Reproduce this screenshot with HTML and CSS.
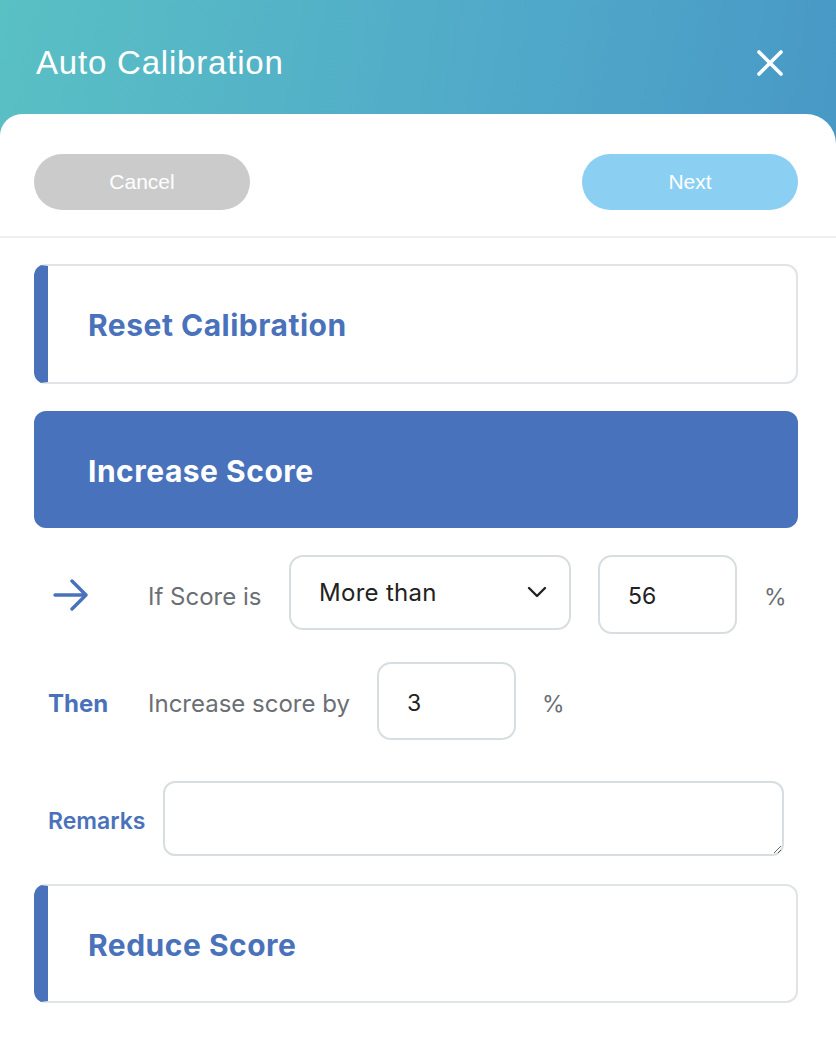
FILE: index.html
```html
<!DOCTYPE html>
<html lang="en">
<head>
<meta charset="utf-8">
<title>Auto Calibration</title>
<link rel="stylesheet" href="styles.css">
</head>
<body>
<div class="page">
  <header class="header">
    <h1 class="title">Auto Calibration</h1>
    <button class="close" aria-label="Close">
      <svg width="26" height="26" viewBox="0 0 26 26"><path d="M2 2 L24 24 M24 2 L2 24" stroke="#fff" stroke-width="3.6" stroke-linecap="round" fill="none"/></svg>
    </button>
  </header>
  <main class="panel">
    <div class="actions">
      <button class="btn btn-cancel">Cancel</button>
      <button class="btn btn-next">Next</button>
    </div>
    <div class="content">
      <div class="card card-outline"><span class="card-title">Reset Calibration</span></div>
      <div class="card card-filled"><span class="card-title">Increase Score</span></div>

      <div class="row row-if">
        <div class="lead lead-icon">
          <svg width="36" height="32" viewBox="0 0 36 32"><path d="M2 16 H33 M19 2 L33 16 L19 30" stroke="#4a72bb" stroke-width="3.4" stroke-linecap="round" stroke-linejoin="round" fill="none"/></svg>
        </div>
        <span class="label label-if">If Score is</span>
        <div class="select">
          <span>More than</span>
          <svg width="20" height="12" viewBox="0 0 20 12"><path d="M2 2 L10 10 L18 2" stroke="#222" stroke-width="2.4" stroke-linecap="round" stroke-linejoin="round" fill="none"/></svg>
        </div>
        <div class="input input-tall">56</div>
        <span class="unit unit-if">%</span>
      </div>

      <div class="row row-then">
        <div class="lead lead-text"><span class="then">Then</span></div>
        <span class="label label-then">Increase score by</span>
        <div class="input input-mid">3</div>
        <span class="unit unit-then">%</span>
      </div>

      <div class="row row-remarks">
        <div class="lead lead-remarks"><span class="remarks">Remarks</span></div>
        <textarea class="textarea"></textarea>
      </div>

      <div class="card card-outline card-last"><span class="card-title">Reduce Score</span></div>
    </div>
  </main>
</div>
</body>
</html>
```

FILE: styles.css
```css
* { box-sizing: border-box; }
html, body { margin: 0; padding: 0; background: #fff; }
body { width: 836px; height: 1042px; overflow: hidden; font-family: "Inter", "Noto Sans", sans-serif; }

.page {
  background: linear-gradient(100deg, #59c0c4 0%, #50a9c9 60%, #4899c6 100%);
  background-size: 100% 150px;
  background-repeat: no-repeat;
  min-height: 1042px;
}

.header {
  height: 114px;
  display: flex;
  align-items: center;
  justify-content: space-between;
  padding: 12px 53px 0 36px;
}
.title {
  margin: 0;
  font-family: "Liberation Sans", Arial, sans-serif;
  font-weight: 400;
  font-size: 33px;
  color: #fff;
  letter-spacing: 0.8px;
}
.close {
  background: none;
  border: 0;
  padding: 0;
  width: 26px;
  height: 26px;
  display: flex;
}

.panel {
  background: #fff;
  border-radius: 22px 30px 0 0;
  min-height: 928px;
}

.actions {
  display: flex;
  justify-content: space-between;
  padding: 40px 38px 26px 34px;
  border-bottom: 2px solid #f0f0f0;
}
.btn {
  width: 216px;
  height: 56px;
  border: 0;
  border-radius: 28px;
  color: #fff;
  font-family: "Liberation Sans", Arial, sans-serif;
  font-size: 21px;
  padding: 0;
}
.btn-cancel { background: #cbcbcb; }
.btn-next { background: #8bd0f2; }

.content {
  padding: 26px 38px 0 34px;
  display: flex;
  flex-direction: column;
}

.card {
  border-radius: 12px;
  display: flex;
  align-items: center;
  padding-left: 54px;
}
.card-title {
  font-size: 30px;
  font-weight: 700;
  letter-spacing: 0.5px;
  padding-top: 2px;
}
.card-outline {
  height: 120px;
  border: 2px solid #e0e4e7;
  border-left: 14px solid #4a72bb;
  padding-left: 40px;
}
.card-outline .card-title { color: #4a72bb; }
.card-filled {
  height: 117px;
  margin-top: 27px;
  background: #4872bc;
}
.card-filled .card-title { color: #fff; }
.card-last { margin-top: 28px; height: 119px; }

.row {
  display: flex;
  align-items: center;
}
.row-if { margin-top: 27px; height: 79px; }
.row-then { margin-top: 28px; height: 78px; }
.row-remarks { margin-top: 41px; height: 75px; }

.lead { display: flex; align-items: center; }
.lead-icon { width: 114px; padding-left: 19px; }
.lead-text { width: 114px; padding-left: 14px; }
.lead-remarks { width: 129px; padding-left: 14px; }

.label {
  font-size: 24px;
  color: #6b6f74;
  padding-top: 4px;
}
.label-if { width: 141px; }
.label-then { width: 229px; }

.then, .remarks {
  font-size: 24px;
  color: #4a72bb;
  padding-top: 4px;
}
.then { font-weight: 700; }
.remarks { font-weight: 600; font-size: 23px; }

.select {
  width: 282px;
  height: 75px;
  border: 2px solid #d7dde0;
  border-radius: 14px;
  display: flex;
  align-items: center;
  justify-content: space-between;
  padding: 0 22px 0 28px;
  font-size: 24px;
  letter-spacing: 0.3px;
  color: #222;
  align-self: flex-start;
}
.select svg { margin-top: -2px; }

.input {
  width: 139px;
  border: 2px solid #d7dde0;
  border-radius: 14px;
  display: flex;
  align-items: center;
  padding-left: 28px;
  font-size: 23px;
  color: #222;
  padding-top: 3px;
}
.input-tall { height: 79px; margin-left: 27px; }
.input-mid { height: 78px; }

.unit {
  font-size: 23px;
  color: #6b6f74;
  padding-top: 5px;
}
.unit-if { margin-left: 27px; }
.unit-then { margin-left: 26px; }

.textarea {
  width: 621px;
  height: 75px;
  border: 2px solid #d7dde0;
  border-radius: 12px;
  font-family: inherit;
  font-size: 20px;
  padding: 10px;
  margin: 0;
  outline: none;
}
```
